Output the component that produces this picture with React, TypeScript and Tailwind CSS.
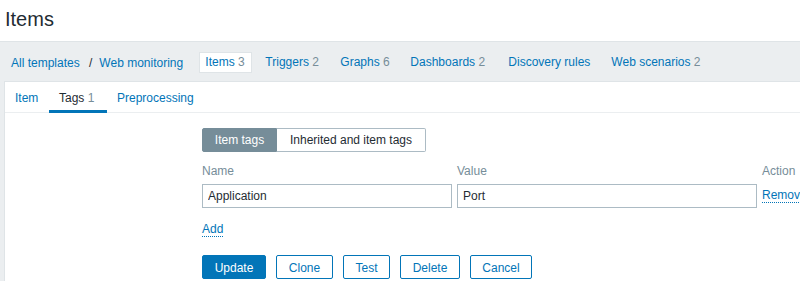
import React from 'react';

const navItems = [
  { label: 'Items', count: '3', active: true, w: 'w-[53px]' },
  { label: 'Triggers', count: '2', w: 'w-[68px]' },
  { label: 'Graphs', count: '6', w: 'w-[63px]' },
  { label: 'Dashboards', count: '2', w: 'w-[91px]' },
  { label: 'Discovery rules', w: 'w-[96px]' },
  { label: 'Web scenarios', count: '2', w: 'w-[110px]' },
];

const tabs = [
  { label: 'Item', w: 'w-[44px]' },
  { label: 'Tags', count: '1', active: true, w: 'w-[58px]' },
  { label: 'Preprocessing', w: 'w-[110px]' },
];

const buttons = [
  { label: 'Clone', w: 'w-[57px]' },
  { label: 'Test', w: 'w-[47px]' },
  { label: 'Delete', w: 'w-[60px]' },
  { label: 'Cancel', w: 'w-[62px]' },
];

function NavItem({ label, count, active, w }: { label: string; count?: string; active?: boolean; w: string }) {
  return (
    <span
      className={
        'h-[21px] leading-[19px] pl-[5px] border shrink-0 ' +
        w +
        ' ' +
        (active ? 'bg-white border-[#dfe4e7]' : 'border-transparent')
      }
    >
      <span className="text-[#0275b8]">{label}</span>
      {count && <span className="text-[#768d99]"> {count}</span>}
    </span>
  );
}

function DottedLink({ children }: { children: React.ReactNode }) {
  return (
    <span className="text-[#0275b8] border-b border-dotted border-[#0275b8] leading-[14px] inline-block">
      {children}
    </span>
  );
}

export default function App() {
  return (
    <div
      className="w-[800px] h-[281px] overflow-hidden bg-white text-[12px] text-[#1f2c33]"
      style={{ fontFamily: '"Liberation Sans", Arial, sans-serif' }}
    >
      {/* header */}
      <div className="h-[41px] px-[5px] pt-[7px]">
        <h1 className="text-[20px] leading-[24px]">Items</h1>
      </div>

      <div className="bg-[#ebeef0] border-t border-[#dfe4e7] h-[240px] pl-[4px]">
        {/* breadcrumbs + navigation */}
        <div className="h-[39px] pt-[2px] flex items-center pl-[1px] gap-[7px] whitespace-nowrap">
          <div className="flex items-center shrink-0">
            <span className="ml-[6px] w-[78px] text-[#0275b8]">All templates</span>
            <span className="text-[#1f2c33]">/</span>
            <span className="ml-[7px] w-[100px] text-[#0275b8]">Web monitoring</span>
          </div>
          <div className="flex items-center gap-[7px] -ml-[7px]">
            {navItems.map((n) => (
              <NavItem key={n.label} {...n} />
            ))}
          </div>
        </div>

        {/* content panel */}
        <div className="bg-white border-t border-l border-[#dfe4e7] h-[200px] w-[1000px]">
          <div className="flex border-b border-[#ebeef0] h-[31px]">
            {tabs.map((t) => (
              <div
                key={t.label}
                className={
                  'h-[31px] -mb-[1px] pl-[10px] pt-[9px] leading-[14px] whitespace-nowrap ' +
                  t.w +
                  ' ' +
                  (t.active ? 'border-b-[3px] border-[#0275b8]' : '')
                }
              >
                <span className={t.active ? 'text-[#1f2c33]' : 'text-[#0275b8]'}>{t.label}</span>
                {t.count && <span className="text-[#768d99]"> {t.count}</span>}
              </div>
            ))}
          </div>

          <div className="pl-[197px] pt-[15px]">
            {/* toggle */}
            <div className="flex h-[24px] whitespace-nowrap">
              <div className="w-[75px] text-center leading-[22px] bg-[#768d99] border border-[#768d99] text-white rounded-l-[2px]">
                Item tags
              </div>
              <div className="w-[149px] text-center leading-[22px] border border-l-0 border-[#acbbc4] rounded-r-[2px]">
                Inherited and item tags
              </div>
            </div>

            {/* tags table */}
            <div className="grid grid-cols-[250px_300px_auto] gap-x-[5px] mt-[12px] whitespace-nowrap">
              <div className="leading-[14px] text-[#768d99]">Name</div>
              <div className="leading-[14px] text-[#768d99]">Value</div>
              <div className="leading-[14px] text-[#768d99]">Action</div>
              <input
                className="mt-[6px] h-[24px] border border-[#acbbc4] px-[5px] outline-none text-[#1f2c33]"
                defaultValue="Application"
              />
              <input
                className="mt-[6px] h-[24px] border border-[#acbbc4] px-[5px] outline-none text-[#1f2c33]"
                defaultValue="Port"
              />
              <div className="mt-[6px] pt-[4px] flex items-start">
                <DottedLink>Remove</DottedLink>
              </div>
            </div>

            <div className="mt-[14px] flex items-start">
              <DottedLink>Add</DottedLink>
            </div>

            {/* buttons */}
            <div className="flex gap-[10px] mt-[18px]">
              <button className="w-[64px] h-[24px] pt-[2px] bg-[#0275b8] border border-[#0275b8] text-white rounded-[2px]">
                Update
              </button>
              {buttons.map((b) => (
                <button
                  key={b.label}
                  className={
                    'h-[24px] pt-[2px] bg-white border border-[#0275b8] text-[#0275b8] rounded-[2px] ' + b.w
                  }
                >
                  {b.label}
                </button>
              ))}
            </div>
          </div>
        </div>
      </div>
    </div>
  );
}
